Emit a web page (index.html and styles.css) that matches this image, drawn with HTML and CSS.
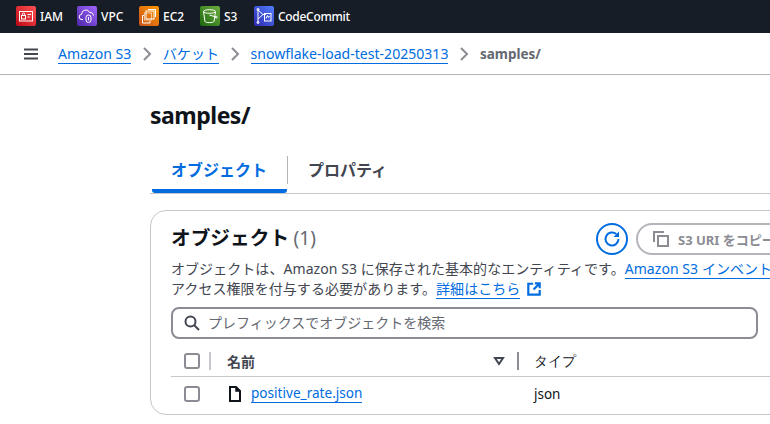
FILE: index.html
```html
<!DOCTYPE html>
<html lang="ja">
<head>
<meta charset="utf-8">
<title>samples/</title>
<link rel="stylesheet" href="styles.css">
</head>
<body>
<header class="topbar">
  <a class="svc svc-iam"><span class="svc-icon iam"><svg viewBox="0 0 20 20" width="20" height="20"><g fill="none" stroke="#fff" stroke-width="1"><rect x="3.500" y="5.500" width="13" height="9.500"/><rect x="5.500" y="9.500" width="4" height="3.500"/><path d="M6.300 9.500V8.200a1.200 1.200 0 0 1 2.400 0v1.300M11.500 8.500h3.500M11.500 11h2"/></g></svg></span>IAM</a>
  <a class="svc svc-vpc"><span class="svc-icon vpc"><svg viewBox="0 0 20 20" width="20" height="20"><g fill="none" stroke="#fff" stroke-width="1"><path d="M6 13.500H5a2.600 2.600 0 0 1-.4-5.200A4.200 4.200 0 0 1 12.600 6.400a3.300 3.300 0 0 1 3.800 3.300"/><rect x="9" y="9" width="5" height="7.500" rx="2.500"/><path d="M11.500 11v3.500"/></g></svg></span>VPC</a>
  <a class="svc svc-ec2"><span class="svc-icon ec2"><svg viewBox="0 0 20 20" width="20" height="20"><g fill="none" stroke="#fff" stroke-width="1"><rect x="7" y="5" width="8" height="8"/><path d="M9 3.500h7.500V11M5 9.500H3.500V17H11v-2"/><rect x="5.500" y="7" width="7" height="7" opacity=".6"/></g></svg></span>EC2</a>
  <a class="svc svc-s3"><span class="svc-icon s3"><svg viewBox="0 0 20 20" width="20" height="20"><g fill="none" stroke="#fff" stroke-width="1"><ellipse cx="9.500" cy="5.500" rx="6" ry="1.800"/><path d="M3.500 5.500l1.500 10c.3 1.500 8.700 1.500 9 0l1.500-10"/><path d="M9.500 9l6.500 2"/><circle cx="16.300" cy="11.200" r=".9"/></g></svg></span>S3</a>
  <a class="svc svc-cc"><span class="svc-icon cc"><svg viewBox="0 0 20 20" width="20" height="20"><g fill="none" stroke="#fff" stroke-width="1"><path d="M4 3v14M4 4l5 4.500L4 13M9 8.500h3"/><circle cx="4" cy="3.500" r="1"/><circle cx="4" cy="16.500" r="1"/><rect x="10.500" y="7.500" width="6.500" height="7.500"/><path d="M12 12.500l1.500-3 1 2 1-1.500"/></g></svg></span>CodeCommit</a>
</header>

<nav class="crumbs">
  <svg class="burger" viewBox="0 0 14 12" width="14" height="12"><path d="M0 1.500h14M0 6h14M0 10.500h14" stroke="#424650" stroke-width="2"/></svg>
  <a class="crumb">Amazon S3</a>
  <svg class="chev" viewBox="0 0 10 14" width="10" height="14"><path d="M2 1l6 6-6 6" fill="none" stroke="#8c8c94" stroke-width="2"/></svg>
  <a class="crumb">バケット</a>
  <svg class="chev" viewBox="0 0 10 14" width="10" height="14"><path d="M2 1l6 6-6 6" fill="none" stroke="#8c8c94" stroke-width="2"/></svg>
  <a class="crumb">snowflake-load-test-20250313</a>
  <svg class="chev" viewBox="0 0 10 14" width="10" height="14"><path d="M2 1l6 6-6 6" fill="none" stroke="#8c8c94" stroke-width="2"/></svg>
  <span class="crumb-current">samples/</span>
</nav>

<main class="main">
  <h1 class="title">samples/</h1>
  <div class="tabs">
    <div class="tab tab-active">オブジェクト</div>
    <div class="tab-sep"></div>
    <div class="tab">プロパティ</div>
  </div>

  <section class="panel">
    <div class="panel-head">
      <h2 class="panel-title">オブジェクト <span class="count">(1)</span></h2>
      <div class="actions">
        <button class="refresh"><svg viewBox="0 0 20 20" width="20" height="20"><path d="M16.500 10a6.500 6.500 0 1 1-2.200-4.900" fill="none" stroke="#006ce0" stroke-width="2"/><path d="M17 2.500v5.500h-5.500z" fill="#006ce0"/></svg></button>
        <button class="copy"><svg viewBox="0 0 16 16" width="16" height="16"><g fill="none" stroke="#8c8c94" stroke-width="2"><path d="M11 1H1v10"/><rect x="5" y="5" width="10" height="10"/></g></svg>S3 URI をコピー</button>
      </div>
    </div>
    <p class="desc">オブジェクトは、Amazon S3 に保存された基本的なエンティティです。<a class="link">Amazon S3 インベントリ</a> を使用すると、バケット内のすべてのオブジェクトのリストを取得できます。他のユーザーにオブジェクトへの<br>アクセス権限を付与する必要があります。<a class="link">詳細はこちら</a><svg class="ext" viewBox="0 0 16 16" width="14" height="14"><path d="M14.500 9v5.500H1.500V2H7" fill="none" stroke="#006ce0" stroke-width="2.500"/><path d="M9 1.500h5.500V7M14 2L7.500 8.500" fill="none" stroke="#006ce0" stroke-width="2.500"/></svg></p>
    <div class="search">
      <svg viewBox="0 0 16 16" width="16" height="16"><circle cx="6.500" cy="6.500" r="5" fill="none" stroke="#424650" stroke-width="2"/><path d="M10 10l5 5" stroke="#424650" stroke-width="2"/></svg>
      <span class="placeholder">プレフィックスでオブジェクトを検索</span>
    </div>
    <div class="row row-head">
      <div class="cell-check"><span class="check"></span><span class="div div-light"></span></div>
      <div class="cell-name"><span class="th">名前</span><svg class="sort" viewBox="0 0 12 10" width="12" height="10"><path d="M2 2h8L6 8z" fill="none" stroke="#424650" stroke-width="2"/></svg><span class="div"></span></div>
      <div class="cell-type th th-light">タイプ</div>
    </div>
    <div class="row row-body">
      <div class="cell-check"><span class="check"></span></div>
      <div class="cell-name"><svg class="file" viewBox="0 0 14 16" width="14" height="16"><path d="M2 1h6l4 4v10H2z" fill="none" stroke="#0f141a" stroke-width="2"/><path d="M8 1v4h4" fill="#0f141a" stroke="#0f141a" stroke-width="1.500"/></svg><a class="link file-link">positive_rate.json</a></div>
      <div class="cell-type">json</div>
    </div>
  </section>
</main>
</body>
</html>
```
FILE: styles.css
```css
* { box-sizing: border-box; }
html, body { margin: 0; padding: 0; height: 424px; overflow: hidden; background: #fff; }
body { font-family: "Open Sans", "Noto Sans", "Noto Sans CJK JP", sans-serif; font-size: 13px; color: #424650; }
svg { display: block; flex: none; }

.topbar { height: 33px; background: #161d26; display: flex; align-items: center; padding: 0 0 1px 16px; color: #fff; font-size: 12px; font-family: "Noto Sans", sans-serif; font-weight: 500; }
.svc { display: flex; align-items: center; gap: 4px; }
.svc-iam { width: 61px; }
.svc-vpc { width: 62px; }
.svc-ec2 { width: 61px; }
.svc-s3 { width: 54px; }
.svc-cc { letter-spacing: -.3px; }
.svc-icon { width: 20px; height: 20px; border-radius: 2px; display: block; }
.iam { background: linear-gradient(45deg, #bd0816, #ff5252); }
.vpc { background: linear-gradient(45deg, #4d27a8, #a166ff); }
.ec2 { background: linear-gradient(45deg, #c8511b, #ff9900); }
.s3 { background: linear-gradient(45deg, #1b660f, #6cae3e); }
.cc { background: linear-gradient(45deg, #2e27ad, #527fff); }

.crumbs { height: 42px; border-bottom: 1px solid #b4b4bb; display: flex; align-items: center; padding-left: 24px; font-family: "Noto Sans", "Noto Sans CJK JP", sans-serif; font-size: 14.070px; }
.burger { margin-right: 20px; }
.crumb { color: #006ce0; border-bottom: 1px solid #006ce0; line-height: 19px; }
.chev { margin: 0 10.500px 0 11px; }
.crumb-current { color: #656871; font-weight: 700; font-size: 13.500px; }

.main { padding-left: 150px; width: 1400px; }
.title { margin: 25px 0 0; font-size: 23px; line-height: 30px; font-weight: 700; color: #0f141a; font-family: "Noto Sans", sans-serif; letter-spacing: -.5px; }
.tabs { margin-top: 24px; height: 40px; width: 1250px; border-bottom: 1px solid #c6c6cd; display: flex; align-items: flex-start; }
.tab { font-weight: 700; font-size: 16px; line-height: 30px; height: 39px; color: #424650; padding: 0 20px; font-family: "Noto Sans CJK JP", sans-serif; }
.tab-active { color: #006ce0; width: 135px; margin-left: 2px; padding: 0 0 0 19px; border-bottom: 4px solid #006ce0; border-radius: 3px; }
.tab-sep { width: 1px; height: 28px; background: #b4b4bb; margin: 2px 0 0 0; }

.panel { margin-top: 16px; width: 1250px; height: 205px; border: 1px solid #c6c6cd; border-radius: 16px; padding: 0 20px; }
.panel-head { display: flex; height: 48px; }
.panel-title { margin: 11px 0 0; width: 425px; font-size: 19.700px; line-height: 30px; font-weight: 700; color: #0f141a; font-family: "Noto Sans CJK JP", "Noto Sans", sans-serif; }
.count { font-weight: 400; color: #656871; font-family: "Noto Sans", sans-serif; font-size: 19px; }
.actions { margin-top: 12px; display: flex; gap: 8px; height: 32px; }
.refresh { width: 32px; height: 32px; padding: 0; border: 2px solid #006ce0; border-radius: 50%; background: #fff; display: flex; align-items: center; justify-content: center; }
.copy { height: 32px; width: 200px; padding: 0 0 0 15px; border: 2px solid #b4b4bb; border-radius: 16px; background: #fff; display: flex; align-items: center; gap: 9px; color: #8c8c94; font: 700 13px "Noto Sans", "Noto Sans CJK JP", sans-serif; white-space: nowrap; }
.desc { margin: 0; font-size: 14px; line-height: 20px; white-space: nowrap; color: #424650; letter-spacing: .06px; font-family: "Noto Sans", "Noto Sans CJK JP", sans-serif; }
.link { color: #006ce0; border-bottom: 1px solid #006ce0; }
.ext { display: inline-block; vertical-align: -2px; margin-left: 6.500px; }

.search { margin-top: 8px; width: 587px; height: 32px; border: 2px solid #8c8c94; border-radius: 8px; display: flex; align-items: center; padding: 0 0 0 11px; gap: 8px; }
.placeholder { color: #656871; font-size: 14px; line-height: 20px; padding-bottom: 2px; font-family: "Noto Sans CJK JP", sans-serif; }

.row { display: flex; align-items: center; margin-right: -20px; }
.row-head { height: 38px; padding-top: 7px; border-bottom: 1px solid #c6c6cd; }
.row-body { height: 33px; }
.cell-check { width: 55px; display: flex; align-items: center; padding-left: 13px; gap: 9px; flex: none; }
.check { width: 16px; height: 16px; border: 2px solid #8c8c94; border-radius: 3px; display: block; }
.div { width: 2px; height: 18px; background: #8c8c94; display: block; }
.div-light { background: #c6c6cd; }
.cell-name { width: 293px; display: flex; align-items: center; flex: none; }
.th { font-weight: 700; font-size: 14px; color: #424650; font-family: "Noto Sans CJK JP", sans-serif; }
.th-light { font-weight: 500; }
.row-head .cell-name .th { flex: 1; padding-left: 1px; }
.sort { margin-right: 12px; }
.file { margin: 0 9px 0 2px; }
.file-link { font-size: 13.600px; font-family: "Noto Sans", sans-serif; line-height: 18px; }
.cell-type { margin-left: 15px; color: #0f141a; font-size: 13.500px; font-family: "Noto Sans", sans-serif; }
```
